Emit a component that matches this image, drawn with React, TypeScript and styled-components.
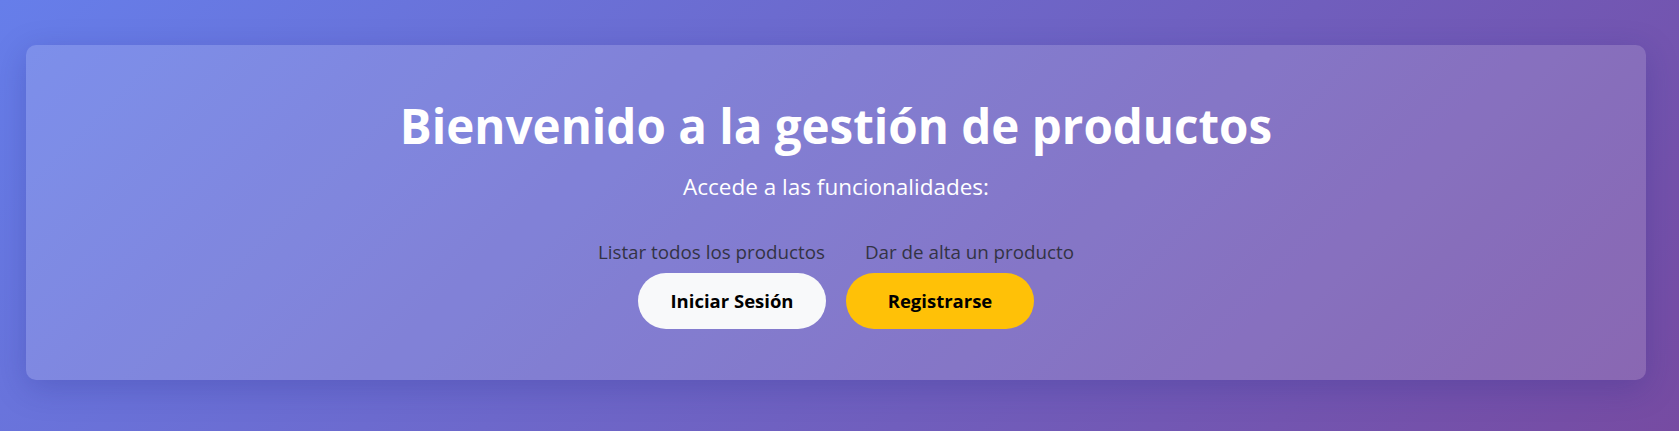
import React from "react";
import styled, { createGlobalStyle } from "styled-components";

const GlobalStyle = createGlobalStyle`
  html, body {
    margin: 0;
    padding: 0;
  }
  body {
    font-family: "Open Sans", "Noto Sans", "Liberation Sans", sans-serif;
    font-variant-ligatures: none;
  }
  * { box-sizing: border-box; }
`;

const Page = styled.div`
  min-height: 100vh;
  height: 431px;
  padding: 45px 33px 51px 26px;
  background: linear-gradient(135deg, #667eea 0%, #764ba2 100%);
`;

const Card = styled.section`
  height: 100%;
  display: flex;
  flex-direction: column;
  align-items: center;
  padding: 52px 20px 0;
  border-radius: 10px;
  background: rgba(255, 255, 255, 0.15);
  box-shadow: 0 8px 32px rgba(31, 38, 135, 0.25);
  text-align: center;
`;

const Title = styled.h1`
  margin: 0;
  font-size: 47.5px;
  line-height: 1.2;
  font-weight: 700;
  color: #ffffff;
`;

const Subtitle = styled.p`
  margin: 16px 0 0;
  font-size: 22.5px;
  line-height: 1.5;
  color: #ffffff;
`;

const LinkRow = styled.nav`
  display: flex;
  gap: 40px;
  margin-top: 34px;
`;

const TextLink = styled.a`
  font-size: 18.8px;
  line-height: 1.5;
  color: #333344;
  text-decoration: none;
  cursor: pointer;
`;

const ButtonRow = styled.div`
  display: flex;
  gap: 20px;
  margin-top: 7px;
`;

const PillButton = styled.button<{ $variant: "light" | "warning" }>`
  width: 188px;
  height: 56px;
  padding: 0;
  border: none;
  border-radius: 28px;
  font-family: inherit;
  font-size: 18.5px;
  font-weight: 700;
  color: #000;
  cursor: pointer;
  background: ${(p) => (p.$variant === "light" ? "#f8f9fa" : "#ffc107")};
`;

export default function App() {
  return (
    <>
      <GlobalStyle />
      <Page>
        <Card>
          <Title>Bienvenido a la gestión de productos</Title>
          <Subtitle>Accede a las funcionalidades:</Subtitle>
          <LinkRow>
            <TextLink>Listar todos los productos</TextLink>
            <TextLink>Dar de alta un producto</TextLink>
          </LinkRow>
          <ButtonRow>
            <PillButton $variant="light">Iniciar Sesión</PillButton>
            <PillButton $variant="warning">Registrarse</PillButton>
          </ButtonRow>
        </Card>
      </Page>
    </>
  );
}
